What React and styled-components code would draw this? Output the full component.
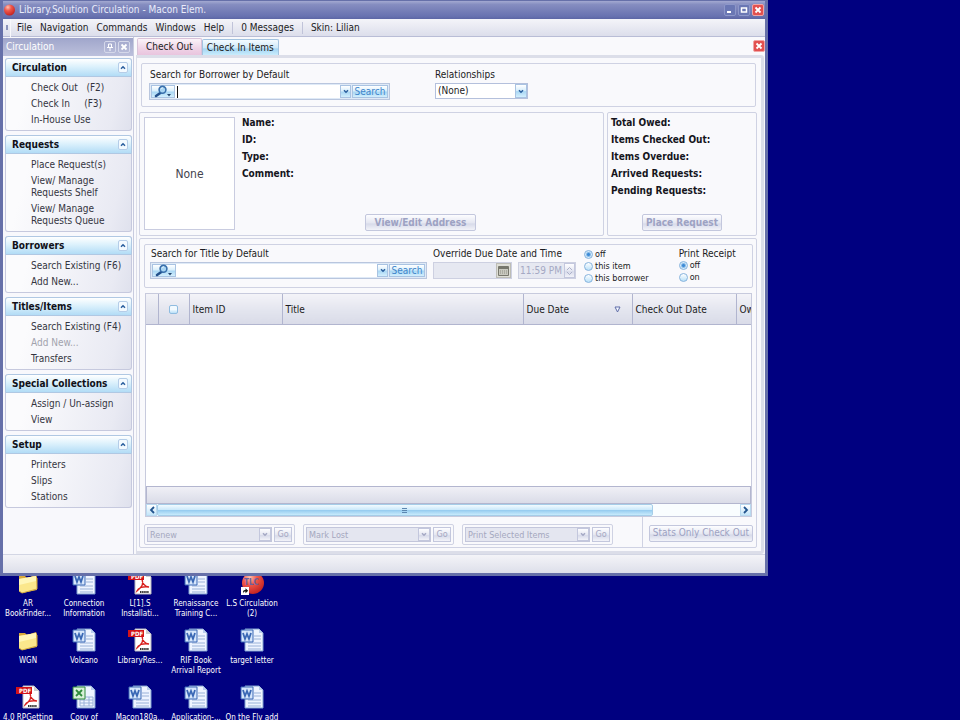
import styled, { createGlobalStyle, css } from "styled-components";

const GlobalStyle = createGlobalStyle`
  * {
    box-sizing: border-box;
  }

  body {
    margin: 0;
    background: #000080;
  }

  body,
  button,
  input,
  select {
    font-family: "DejaVu Sans Condensed", "Noto Sans", sans-serif;
    font-size: 10px;
    line-height: 12px;
    color: #1b1b22;
  }

  button {
    padding: 0;
    border: 0;
    background: none;
    white-space: nowrap;
  }
`;

const blueFace = css`
  background: linear-gradient(#ffffff, #d9effc 45%, #a9d7f4 55%, #d3effd);
  border: 1px solid #a9c3e2;
`;

const paleFace = css`
  background: linear-gradient(#fdfdff, #e6e8f2 50%, #d8dbea 60%, #f2f3f9);
  border: 1px solid #c3c7dd;
`;

const Desktop = styled.div`
  height: 100vh;
  overflow: hidden;
  background: #000080;
`;

const AppWindow = styled.div`
  position: relative;
  z-index: 1;
  display: flex;
  flex-direction: column;
  width: 80vw;
  height: 80vh;
  border: solid #6670a9;
  border-width: 1px 3px 3px;
  background: #f9f9fc;
`;

const TitleBar = styled.header`
  display: flex;
  align-items: center;
  gap: 4px;
  height: 18px;
  flex: none;
  background: linear-gradient(#a3a9d1, #858dc0 20%, #6872b0 85%, #5c66a5);
`;

const TitleText = styled.h1`
  flex: 1;
  margin: 0;
  font-size: 10px;
  font-weight: normal;
  color: #e9ecfa;
`;

const CaptionButton = styled.button`
  display: flex;
  align-items: center;
  justify-content: center;
  width: 12px;
  height: 12px;
  border: 1px solid ${(p) => (p.$red ? "#f0a4a4" : "#8d97c9")};
  border-radius: 2px;
  background: ${(p) => (p.$red ? "#e2504f" : "#6a77b4")};
`;

const CaptionButtons = styled.div`
  display: flex;
  gap: 2px;
  padding-right: 1px;
`;

const MenuBar = styled.nav`
  display: flex;
  align-items: center;
  flex: none;
  height: 18px;
  border-bottom: 1px solid #b9bdd6;
  background: linear-gradient(#f4f4f9, #dcdeeb);
`;

const Grip = styled.span`
  width: 8px;
  height: 18px;
  margin-right: 2px;
  border-right: 1px solid #f8f8fc;
  background: linear-gradient(#8b93bb, #8b93bb) center / 2px 5px no-repeat;
`;

const MenuItem = styled.button`
  padding: 0 4px;
`;

const MenuDivider = styled.span`
  width: 1px;
  height: 12px;
  margin: 0 4px;
  background: #c0c3d9;
`;

const Body = styled.div`
  display: flex;
  flex: 1;
  min-height: 0;
`;

const Sidebar = styled.aside`
  width: 131px;
  flex: none;
  border-right: 1px solid #c8cbdf;
  background: #f8f8fc;
`;

const SidebarTitle = styled.div`
  display: flex;
  align-items: center;
  gap: 2px;
  height: 18px;
  margin-top: 1px;
  padding: 0 3px;
  background: linear-gradient(#a0a6cb, #bcc0dc);
  color: #ffffff;

  span {
    flex: 1;
  }
`;

const PanelButton = styled.button`
  display: flex;
  align-items: center;
  justify-content: center;
  width: 12px;
  height: 12px;
  border: 1px solid #d5d8ea;
  border-radius: 2px;
`;

const Groups = styled.div`
  display: grid;
  gap: 4px;
  padding: 2px 1px 0 2px;
`;

const Group = styled.section`
  padding-bottom: 2px;
  border: solid #c6c9de;
  border-width: 0 1px 1px;
  border-radius: 3px;
  background: linear-gradient(105deg, #fbfbfd 20%, #e9eaf3 85%, #dfe1ed);
`;

const GroupHeader = styled.div`
  display: flex;
  align-items: center;
  justify-content: space-between;
  height: 19px;
  margin: 0 -1px;
  padding: 0 3px 0 6px;
  border: 1px solid #b0c8e3;
  border-radius: 3px 3px 0 0;
  background: linear-gradient(#ffffff, #dcf1fc 45%, #b2dcf6);
`;

const GroupTitle = styled.h2`
  margin: 0;
  font-size: 10px;
  color: #101018;
`;

const Fold = styled.button`
  display: flex;
  align-items: center;
  justify-content: center;
  width: 10px;
  height: 11px;
  border: 1px solid #b5cde8;
  border-radius: 2px;
  background: #f3faff;
`;

const GroupItems = styled.div`
  display: flex;
  flex-direction: column;
  align-items: flex-start;
  padding: 3px 0 0 25px;
`;

const GroupItem = styled.button`
  padding: 2px 0;
  text-align: left;
  white-space: pre;
  color: ${(p) => (p.disabled ? "#a2a3ad" : "#34353f")};
`;

const Main = styled.main`
  display: flex;
  flex: 1;
  flex-direction: column;
  min-width: 0;
  padding: 1px 0 0 2px;
`;

const TabRow = styled.div`
  display: flex;
  align-items: flex-end;
  height: 17px;
  flex: none;
  padding-left: 1px;
`;

const Tab = styled.button`
  height: ${(p) => (p.$active ? "17px" : "16px")};
  padding: 0 ${(p) => (p.$active ? "8px" : "4px")};
  border: 1px solid ${(p) => (p.$active ? "#d9c3d9" : "#a3c3df")};
  border-bottom: 0;
  border-radius: 2px 2px 0 0;
  background: ${(p) =>
    p.$active
      ? "linear-gradient(#fbf4f9, #efd3e6 60%, #e9c4de)"
      : "linear-gradient(#f4fbff, #cfeafa 50%, #a6d6f3 60%, #c9ecfc)"};
`;

const CloseTab = styled(CaptionButton)`
  margin: 0 0 3px auto;
`;

const Frame = styled.div`
  display: flex;
  flex: 1;
  flex-direction: column;
  gap: 5px;
  min-height: 0;
  margin-right: 1px;
  padding: 5px 4px 3px 2px;
  border: solid #dcdee9;
  border-width: 3px 3px 3px 1px;
  border-radius: 0 3px 3px 0;
`;

const box = css`
  border: 1px solid #cfd2e3;
  border-radius: 2px;
  background: #f9f9fc;
`;

const BorrowerBar = styled.form`
  ${box}
  display: flex;
  gap: 45px;
  height: 44px;
  flex: none;
  margin: 0 1px 0 2px;
  padding: 5px 7px;
`;

const Field = styled.div`
  display: flex;
  flex-direction: column;
  width: ${(p) => p.$width};
  gap: 2px;
`;

const Label = styled.label`
  padding-left: ${(p) => (p.$indent ? "1px" : "0")};
`;

const Combo = styled.div`
  display: flex;
  align-items: stretch;
  height: 17px;
  padding: 1px;
  border: 1px solid #b9c6de;
  background: #dfeaf7;
`;

const LookupButton = styled.button`
  ${blueFace}
  display: flex;
  align-items: center;
  justify-content: center;
  width: 24px;
`;

const ComboText = styled.span`
  display: flex;
  align-items: center;
  flex: 1;
  min-width: 0;
  padding-left: 2px;
  background: #ffffff;
`;

const Caret = styled.span`
  width: 1px;
  height: 12px;
  background: #111111;
`;

const TextInput = styled.input`
  flex: 1;
  min-width: 0;
  height: 12px;
  padding: 0 2px;
  border: 0;
  outline: 0;
  background: transparent;
`;

const ArrowButton = styled.button`
  ${blueFace}
  display: flex;
  align-items: center;
  justify-content: center;
  width: 11px;
`;

const SearchButton = styled.button`
  ${blueFace}
  width: 36px;
  margin-left: 1px;
  line-height: 10px;
  color: #3f86cb;
`;

const SelectShell = styled.div`
  position: relative;
  flex: 1;
  max-height: 16px;
  min-height: 15px;
  border: 1px solid ${(p) => (p.$off ? "#c3c6db" : "#b4c0dc")};
  background: ${(p) => (p.$off ? "#e4e6f0" : "#ffffff")};

  select {
    display: block;
    width: 100%;
    height: 14px;
    padding: 0 14px 0 2px;
    border: 0;
    appearance: none;
    background: transparent;
    font-size: ${(p) => (p.$off ? "9px" : "10px")};
    color: ${(p) => (p.$off ? "#a5a8bf" : "#1b1b22")};
    opacity: 1;
  }
`;

const SelectArrow = styled.span`
  position: absolute;
  top: 0;
  right: 0;
  bottom: 0;
  display: flex;
  align-items: center;
  justify-content: center;
  width: 12px;
  pointer-events: none;
  ${(p) => (p.$off ? paleFace : blueFace)}
`;

const Details = styled.div`
  display: flex;
  gap: 3px;
  flex: none;
  height: 124px;
`;

const BorrowerCard = styled.section`
  ${box}
  display: flex;
  flex: 1;
  gap: 7px;
  padding: 4px;
`;

const Photo = styled.div`
  display: flex;
  align-items: center;
  justify-content: center;
  width: 91px;
  height: 113px;
  border: 1px solid #c9cce0;
  background: #ffffff;
  font-size: 12px;
  color: #44444e;
`;

const Facts = styled.div`
  display: flex;
  flex: 1;
  flex-direction: column;
  align-items: center;
`;

const FactList = styled.ul`
  align-self: stretch;
  flex: 1;
  margin: -3px 0 0;
  padding: 0;
  list-style: none;
  font-weight: bold;
  line-height: 17px;
  color: #15151c;
`;

const Summary = styled.section`
  ${box}
  display: flex;
  flex-direction: column;
  align-items: center;
  width: 150px;
  padding: 4px 3px;
`;

const DisabledButton = styled.button`
  ${paleFace}
  height: 17px;
  padding: 0 ${(p) => p.$pad || "3px"};
  border-radius: 2px;
  font-weight: ${(p) => (p.$bold ? "bold" : "normal")};
  color: #9da2c3;
`;

const Items = styled.section`
  ${box}
  display: flex;
  flex: 1;
  flex-direction: column;
  min-height: 0;
  margin-top: -3px;
  padding: 5px 3px 0 4px;
`;

const TitleForm = styled.form`
  ${box}
  display: flex;
  height: 44px;
  flex: none;
  gap: 6px;
  padding: 3px 5px;
`;

const DateRow = styled.div`
  display: flex;
  gap: 6px;
`;

const OffField = styled.div`
  display: flex;
  width: ${(p) => p.$width};
  height: 17px;
  border: 1px solid #cdd0e1;
  background: #e6e8f1;

  input {
    flex: 1;
    min-width: 0;
    padding: 0 1px;
    border: 0;
    background: transparent;
    color: #a5a9c4;
  }
`;

const CalendarButton = styled.button`
  display: flex;
  align-items: center;
  justify-content: center;
  width: 15px;
  border: 1px solid #bdbdb6;
  background: #deded6;
`;

const Spinner = styled.button`
  ${paleFace}
  display: flex;
  align-items: center;
  justify-content: center;
  width: 11px;
`;

const Options = styled.fieldset`
  display: flex;
  flex-direction: column;
  margin: ${(p) => p.$margin || "0"};
  padding: 0;
  border: 0;

  legend {
    padding: 0;
    line-height: 11px;
  }
`;

const Option = styled.label`
  display: flex;
  align-items: center;
  gap: 2px;
  font-size: 9px;
  line-height: 12px;
  white-space: nowrap;
`;

const Radio = styled.input.attrs({ type: "radio" })`
  appearance: none;
  width: 9px;
  height: 9px;
  margin: 0;
  border: 1px solid #86b3dd;
  border-radius: 50%;
  background: linear-gradient(#ffffff, #b9e0f8);

  &:checked {
    background: radial-gradient(circle, #3d8bd6 0 1px, #d4eafa 3px);
  }
`;

const GridArea = styled.div`
  display: flex;
  flex: 1;
  flex-direction: column;
  min-height: 0;
  overflow: hidden;
  margin: 5px 1px 0;
  border: 1px solid #c7cadd;
  background: #ffffff;
`;

const GridBody = styled.div`
  flex: 1;
  overflow: hidden;
`;

const Table = styled.table`
  width: 690px;
  table-layout: fixed;
  border-collapse: collapse;
  font-size: 10px;
`;

const Th = styled.th`
  width: ${(p) => p.$width};
  height: 30px;
  padding: 2px 3px 0;
  border-right: 1px solid #b1b5cf;
  border-bottom: 1px solid #b1b5cf;
  background: linear-gradient(#f3f3f8, #e4e6ef 50%, #d9dbe8);
  font-weight: normal;
  text-align: left;
  white-space: nowrap;
`;

const SortHead = styled.span`
  display: flex;
  align-items: center;
  justify-content: space-between;
  padding-right: 8px;
`;

const CheckBox = styled.input.attrs({ type: "checkbox" })`
  appearance: none;
  display: block;
  width: 9px;
  height: 9px;
  margin: 0 auto;
  border: 1px solid #8fbce0;
  border-radius: 2px;
  background: linear-gradient(#f2faff 50%, #b9e0f8);
`;

const GridFooter = styled.div`
  height: 18px;
  flex: none;
  border: 1px solid #b3b6cf;
  background: linear-gradient(#f0f0f6, #dadce8);
`;

const ScrollBar = styled.div`
  display: flex;
  height: 12px;
  flex: none;
  background: #f9fdff;
`;

const ScrollArrow = styled.button`
  display: flex;
  align-items: center;
  justify-content: center;
  width: 11px;
  border: 1px solid #b9d9ef;
  background: linear-gradient(#ffffff, #c3e5f9);
`;

const ScrollTrack = styled.div`
  flex: 1;
`;

const ScrollThumb = styled.div`
  display: flex;
  align-items: center;
  justify-content: center;
  width: 85%;
  height: 12px;
  border: 1px solid #a5cde8;
  border-radius: 2px;
  background: linear-gradient(#f2fbff, #cdeafb 45%, #98cdf0 55%, #c8ebfc);
`;

const Actions = styled.div`
  display: flex;
  align-items: center;
  gap: 8px;
  height: 30px;
  flex: none;
`;

const ActionGroup = styled.div`
  ${box}
  display: flex;
  gap: 2px;
  width: 151px;
  height: 21px;
  margin-top: 4px;
  padding: 2px;
`;

const GoButton = styled.button`
  ${paleFace}
  width: 18px;
  height: 15px;
  font-size: 9px;
  color: #a5a8c2;
`;

const StatsCell = styled.div`
  display: flex;
  align-items: center;
  height: 30px;
  margin-left: auto;
  padding: 2px 0 0 6px;
  border-left: 1px solid #cfd2e3;
`;

const StatusBar = styled.footer`
  height: 19px;
  flex: none;
  border-top: 1px solid #d3d6e4;
  background: linear-gradient(#f4f4f8, #dddfea);
`;

const IconGrid = styled.div`
  display: grid;
  grid-template-columns: repeat(5, 56px);
  grid-auto-rows: 57px;
  margin-top: -5px;
`;

const DesktopIcon = styled.button`
  display: flex;
  flex-direction: column;
  align-items: center;
  font-size: 8px;
  line-height: 10px;
  text-align: center;
  white-space: pre;
  color: #ffffff;

  svg {
    flex: none;
    margin-bottom: 4px;
  }
`;

function Chevron({ up, color = "#2b5f9e" }) {
  return (
    <svg width="6" height="5" viewBox="0 0 6 5" fill="none" stroke={color} strokeWidth="1.5">
      <path d={up ? "M1 3.7 3 1.7 5 3.7" : "M1 1.3 3 3.3 5 1.3"} />
    </svg>
  );
}

function Cross({ color = "#ffffff" }) {
  return (
    <svg width="8" height="8" viewBox="0 0 8 8" stroke={color} strokeWidth="1.8">
      <path d="M1.5 1.5l5 5M6.5 1.5l-5 5" />
    </svg>
  );
}

function Magnifier() {
  return (
    <svg width="20" height="13" viewBox="0 0 20 13">
      <path d="M8 7.5 3 11" stroke="#24518c" strokeWidth="2.6" strokeLinecap="round" />
      <circle cx="9.5" cy="4.8" r="3.4" fill="#a9d5f2" stroke="#3970ac" strokeWidth="1.6" />
      <path d="M7.8 4.2c.4-1 1.3-1.4 2.2-1.3" fill="none" stroke="#eff9ff" />
      <path d="M14 9h4l-2 2.500z" fill="#24466f" />
    </svg>
  );
}

function Ball({ size = 12, label }) {
  return (
    <svg width={size} height={size} viewBox="0 0 24 24">
      <defs>
        <radialGradient id="ball" cx=".35" cy=".25" r=".8">
          <stop offset="0" stopColor="#ffc0b0" />
          <stop offset=".4" stopColor="#f0584b" />
          <stop offset="1" stopColor="#c2201f" />
        </radialGradient>
      </defs>
      <circle cx="13" cy="12" r="11" fill="url(#ball)" />
      {label && (
        <>
          <text x="4" y="14" fontSize="8" fontWeight="bold" fill="#6b5f9e">TLC</text>
          <path d="M1 16h8v8H1z" fill="#ffffff" />
          <path d="M3 22.500c0-3 .5-3.500 2.500-3.500v-1.700l2.700 2.500-2.700 2.500V20.600c-1 0-1.800 0-2.500 1.900z" fill="#111111" />
        </>
      )}
    </svg>
  );
}

function Folder() {
  return (
    <svg width="24" height="24" viewBox="0 0 24 24">
      <path d="M3 5h6l2 2 9-3 1 2v13L6 22l-3-3z" fill="#d9a93b" />
      <path d="M3 8l17-3 1 13L6 22l-3-2z" fill="#fbe78c" />
      <path d="M3 8l17-3v5L3 14z" fill="#fff6b8" />
      <path d="M3 20l3 2 15-4V7" fill="none" stroke="#d2ac45" />
    </svg>
  );
}

function OfficeDoc({ excel }) {
  const main = excel ? "#2f8a3b" : "#3a68b5";
  const pale = excel ? "#d9f0d8" : "#d6e6fb";
  return (
    <svg width="24" height="24" viewBox="0 0 24 24">
      <path d="M5 1h14l4 4v18H5z" fill="#eef4ff" stroke="#7f9fd0" />
      <path d="M19 1v4h4z" fill="#b9cdec" />
      <path
        d={excel ? "M8 12h13v9H8zM8 15h13M8 18h13M12 12v9M17 12v9" : "M14 8h7M14 11h7M8 15h13M8 18h13M8 21h13"}
        fill="none"
        stroke="#9ab2d8"
      />
      <path d="M1 2h12v12H1z" fill={pale} stroke={main} />
      <path
        d={excel ? "M4 5l6 6M10 5l-6 6" : "M3 5l2 6 2-5 2 5 2-6"}
        fill="none"
        stroke={main}
        strokeWidth="1.8"
      />
    </svg>
  );
}

function PdfDoc() {
  return (
    <svg width="24" height="24" viewBox="0 0 24 24">
      <path d="M7 1h11l5 5v17H7z" fill="#ffffff" stroke="#b8b8c0" />
      <path d="M18 1v5h5z" fill="#cccccf" />
      <path
        d="M14 8c2 5 0 8-5 12 1-3 6-5 12-4-4 0-7-4-7-8z"
        fill="none"
        stroke="#d8201e"
        strokeWidth="1.3"
      />
      <path d="M0 2h16v7H0z" fill="#d31319" />
      <text x="3" y="8" fontSize="6" fontWeight="bold" fill="#ffffff">PDF</text>
      <path d="M12 21h9" stroke="#333333" strokeWidth="2" strokeDasharray="1.5 .6" />
    </svg>
  );
}

function Dropdown({ id, value, off, label }) {
  return (
    <SelectShell $off={off}>
      <select id={id} disabled={off} aria-label={label}>
        <option>{value}</option>
      </select>
      <SelectArrow $off={off}>
        <Chevron color={off ? "#a4a8c4" : undefined} />
      </SelectArrow>
    </SelectShell>
  );
}

function SearchCombo({ id, caret }) {
  return (
    <Combo>
      <LookupButton type="button" aria-label="Search type">
        <Magnifier />
      </LookupButton>
      <ComboText>
        {caret && <Caret />}
        <TextInput id={id} />
      </ComboText>
      <ArrowButton type="button" aria-label="Recent searches">
        <Chevron />
      </ArrowButton>
      <SearchButton type="button">Search</SearchButton>
    </Combo>
  );
}

const groups = [
  { title: "Circulation", items: ["Check Out   (F2)", "Check In     (F3)", "In-House Use"] },
  {
    title: "Requests",
    items: ["Place Request(s)", "View/ Manage\nRequests Shelf", "View/ Manage\nRequests Queue"],
  },
  { title: "Borrowers", items: ["Search Existing (F6)", "Add New..."] },
  { title: "Titles/Items", items: ["Search Existing (F4)", "Add New...", "Transfers"], disabled: 1 },
  { title: "Special Collections", items: ["Assign / Un-assign", "View"] },
  { title: "Setup", items: ["Printers", "Slips", "Stations"] },
];

const desktopIcons = [
  ["folder", "AR\nBookFinder..."],
  ["word", "Connection\nInformation"],
  ["pdf", "L[1].S\nInstallati..."],
  ["word", "Renaissance\nTraining C..."],
  ["ball", "L.S Circulation\n(2)"],
  ["folder", "WGN"],
  ["word", "Volcano"],
  ["pdf", "LibraryRes..."],
  ["word", "RIF Book\nArrival Report"],
  ["word", "target letter"],
  ["pdf", "4.0 RPGetting"],
  ["excel", "Copy of"],
  ["word", "Macon180a..."],
  ["word", "Application-..."],
  ["word", "On the Fly add"],
];

const iconKinds = {
  folder: <Folder />,
  word: <OfficeDoc />,
  excel: <OfficeDoc excel />,
  pdf: <PdfDoc />,
  ball: <Ball size={24} label />,
};

const App = () => {
  return (
    <Desktop>
      <GlobalStyle />
      <AppWindow>
        <TitleBar>
          <Ball />
          <TitleText>Library.Solution Circulation - Macon Elem.</TitleText>
          <CaptionButtons>
            <CaptionButton aria-label="Minimize">
              <svg width="8" height="8" viewBox="0 0 8 8"><path d="M1 6h4" stroke="#fff" strokeWidth="2" /></svg>
            </CaptionButton>
            <CaptionButton aria-label="Maximize">
              <svg width="8" height="8" viewBox="0 0 8 8"><path d="M1.500 2h5v4h-5z" fill="none" stroke="#fff" strokeWidth="1.500" /></svg>
            </CaptionButton>
            <CaptionButton $red aria-label="Close">
              <Cross />
            </CaptionButton>
          </CaptionButtons>
        </TitleBar>
        <MenuBar>
          <Grip />
          <MenuItem>File</MenuItem>
          <MenuItem>Navigation</MenuItem>
          <MenuItem>Commands</MenuItem>
          <MenuItem>Windows</MenuItem>
          <MenuItem>Help</MenuItem>
          <MenuDivider />
          <MenuItem>0 Messages</MenuItem>
          <MenuDivider />
          <MenuItem>Skin: Lilian</MenuItem>
        </MenuBar>

        <Body>
          <Sidebar>
            <SidebarTitle>
              <span>Circulation</span>
              <PanelButton aria-label="Pin">
                <svg width="8" height="8" viewBox="0 0 8 8" fill="none" stroke="#fff"><path d="M2.500 1h3v3.500h-3zM1 4.500h6M4 4.500V8" /></svg>
              </PanelButton>
              <PanelButton aria-label="Close panel">
                <Cross />
              </PanelButton>
            </SidebarTitle>
            <Groups>
              {groups.map((group) => (
                <Group key={group.title}>
                  <GroupHeader>
                    <GroupTitle>{group.title}</GroupTitle>
                    <Fold aria-label={`Collapse ${group.title}`}>
                      <Chevron up />
                    </Fold>
                  </GroupHeader>
                  <GroupItems>
                    {group.items.map((item, i) => (
                      <GroupItem key={item} disabled={group.disabled === i}>{item}</GroupItem>
                    ))}
                  </GroupItems>
                </Group>
              ))}
            </Groups>
          </Sidebar>

          <Main>
            <TabRow>
              <Tab $active>Check Out</Tab>
              <Tab>Check In Items</Tab>
              <CloseTab $red aria-label="Close tab">
                <Cross />
              </CloseTab>
            </TabRow>
            <Frame>
              <BorrowerBar>
                <Field $width="241px">
                  <Label htmlFor="borrower" $indent>Search for Borrower by Default</Label>
                  <SearchCombo id="borrower" caret />
                </Field>
                <Field $width="93px">
                  <Label htmlFor="relationships">Relationships</Label>
                  <Dropdown id="relationships" value="(None)" />
                </Field>
              </BorrowerBar>

              <Details>
                <BorrowerCard>
                  <Photo>None</Photo>
                  <Facts>
                    <FactList>
                      <li>Name:</li>
                      <li>ID:</li>
                      <li>Type:</li>
                      <li>Comment:</li>
                    </FactList>
                    <DisabledButton $bold $pad="9px" disabled>View/Edit Address</DisabledButton>
                  </Facts>
                </BorrowerCard>
                <Summary>
                  <FactList>
                    <li>Total Owed:</li>
                    <li>Items Checked Out:</li>
                    <li>Items Overdue:</li>
                    <li>Arrived Requests:</li>
                    <li>Pending Requests:</li>
                  </FactList>
                  <DisabledButton $bold disabled>Place Request</DisabledButton>
                </Summary>
              </Details>

              <Items>
                <TitleForm>
                  <Field $width="277px">
                    <Label htmlFor="title" $indent>Search for Title by Default</Label>
                    <SearchCombo id="title" />
                  </Field>
                  <Field $width="143px">
                    <Label htmlFor="due">Override Due Date and Time</Label>
                    <DateRow>
                      <OffField $width="79px">
                        <input id="due" disabled />
                        <CalendarButton type="button" aria-label="Calendar" disabled>
                          <svg width="11" height="10" viewBox="0 0 11 10"><path d="M.5.5h10v9H.5z" fill="#c9c9bf" stroke="#77776c" /><path d="M1 2h9" stroke="#77776c" strokeWidth="2" /><path d="M2 5h7M2 7h7" stroke="#8f8f84" strokeDasharray="1 1" /></svg>
                        </CalendarButton>
                      </OffField>
                      <OffField $width="58px">
                        <input defaultValue="11:59 PM" aria-label="Due time" disabled />
                        <Spinner type="button" aria-label="Change time" disabled>
                          <svg width="7" height="10" viewBox="0 0 8 10" fill="none" stroke="#a4a8c4"><path d="M1 4 4 1l3 3M1 6l3 3 3-3" /></svg>
                        </Spinner>
                      </OffField>
                    </DateRow>
                  </Field>
                  <Options $margin="0 24px 0 2px">
                    <Option><Radio name="override" defaultChecked />off</Option>
                    <Option><Radio name="override" />this item</Option>
                    <Option><Radio name="override" />this borrower</Option>
                  </Options>
                  <Options>
                    <legend>Print Receipt</legend>
                    <Option><Radio name="receipt" defaultChecked />off</Option>
                    <Option><Radio name="receipt" />on</Option>
                  </Options>
                </TitleForm>

                <GridArea>
                  <GridBody>
                    <Table>
                      <thead>
                        <tr>
                          <Th $width="12px" />
                          <Th $width="31px"><CheckBox aria-label="Select all" /></Th>
                          <Th $width="93px">Item ID</Th>
                          <Th $width="241px">Title</Th>
                          <Th $width="109px">
                            <SortHead>
                              Due Date
                              <svg width="7" height="7" viewBox="0 0 7 7"><path d="M1 1h5L3.500 6z" fill="#f4f8ff" stroke="#5f6da8" /></svg>
                            </SortHead>
                          </Th>
                          <Th $width="104px">Check Out Date</Th>
                          <Th $width="100px">Owner</Th>
                        </tr>
                      </thead>
                    </Table>
                  </GridBody>
                  <GridFooter />
                  <ScrollBar>
                    <ScrollArrow aria-label="Scroll left">
                      <svg width="6" height="8" viewBox="0 0 6 8" fill="none" stroke="#22558f" strokeWidth="1.800"><path d="M5 1 2 4l3 3" /></svg>
                    </ScrollArrow>
                    <ScrollTrack>
                      <ScrollThumb>
                        <svg width="5" height="5" viewBox="0 0 5 5" stroke="#5b86b0"><path d="M0 .5h5M0 2.500h5M0 4.500h5" /></svg>
                      </ScrollThumb>
                    </ScrollTrack>
                    <ScrollArrow aria-label="Scroll right">
                      <svg width="6" height="8" viewBox="0 0 6 8" fill="none" stroke="#22558f" strokeWidth="1.800"><path d="m1 1 3 3-3 3" /></svg>
                    </ScrollArrow>
                  </ScrollBar>
                </GridArea>

                <Actions>
                  {["Renew", "Mark Lost", "Print Selected Items"].map((name) => (
                    <ActionGroup key={name}>
                      <Dropdown value={name} label={name} off />
                      <GoButton disabled>Go</GoButton>
                    </ActionGroup>
                  ))}
                  <StatsCell>
                    <DisabledButton disabled>Stats Only Check Out</DisabledButton>
                  </StatsCell>
                </Actions>
              </Items>
            </Frame>
          </Main>
        </Body>
        <StatusBar />
      </AppWindow>

      <IconGrid>
        {desktopIcons.map(([kind, name]) => (
          <DesktopIcon key={name}>
            {iconKinds[kind]}
            {name}
          </DesktopIcon>
        ))}
      </IconGrid>
    </Desktop>
  );
};

export default App;
